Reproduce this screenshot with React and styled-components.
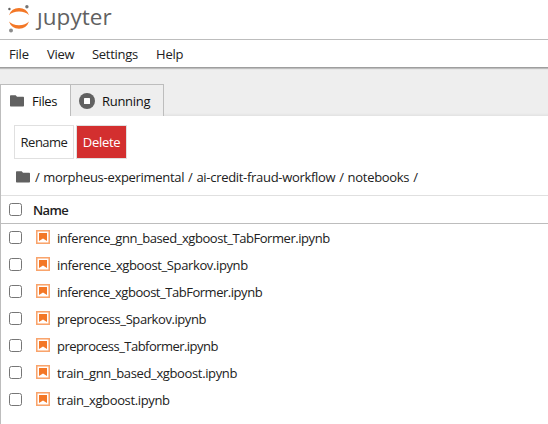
import React from "react";
import styled, { createGlobalStyle } from "styled-components";

const Global = createGlobalStyle`
  * { box-sizing: border-box; }
  body { margin: 0; background: #eee; overflow: hidden; }
`;
const Page = styled.div`
  width: 548px;
  height: 424px;
  display: flex;
  flex-direction: column;
  background: #eee;
  color: #212121;
  font: 13px/18px "Open Sans", "Noto Sans", sans-serif;
  white-space: nowrap;
`;
const Text = styled.span`
  letter-spacing: ${(p) => p.$ls ?? -0.3}px;
  word-spacing: ${(p) => p.$ws ?? 0}px;
`;
const Header = styled.header`
  height: 40px;
  flex: none;
  background: #fff;
  border-bottom: 1px solid #bdbdbd;
  display: flex;
  align-items: flex-start;
  padding-left: 7px;
`;
const Logo = styled.svg`
  width: 24px;
  height: 34px;
  flex: none;
`;
const Wordmark = styled.div`
  margin: 3px 0 0 6px;
  color: #616161;
  font: 22.5px/28px "Open Sans", sans-serif;
  letter-spacing: 0.05px;
`;
const DotlessJ = styled.span`
  display: inline-block;
  clip-path: inset(9px -4px -4px -4px);
`;
const MenuBar = styled.nav`
  height: 28px;
  flex: none;
  display: flex;
  background: #fff;
  border-bottom: 1px solid #9e9e9e;
  box-shadow: 0 1px 1px #bdbdbd;
  padding: 5px 0 0 9px;
`;
const MenuItem = styled.div`
  width: ${(p) => p.$w}px;
`;
const Tabs = styled.div`
  height: 48px;
  flex: none;
  display: flex;
  padding-top: 16px;
`;
const Tab = styled.div`
  width: ${(p) => p.$w}px;
  display: flex;
  align-items: center;
  gap: ${(p) => p.$gap}px;
  padding-left: ${(p) => p.$pad}px;
  padding-top: 1px;
  border: 1px solid #bdbdbd;
  border-bottom: 0;
  border-left-width: ${(p) => (p.$active ? 1 : 0)}px;
  background: ${(p) => (p.$active ? "#fff" : "#eee")};
  color: #111;
`;
const Panel = styled.main`
  flex: 1;
  background: #fff;
  border-left: 1px solid #bdbdbd;
`;
const TabShade = styled.div`
  flex: 1;
  align-self: stretch;
  background: linear-gradient(#eee calc(100% - 3px), #e2e2e2);
`;
const Toolbar = styled.div`
  display: flex;
  gap: 2px;
  padding: 9px 0 0 13px;
`;
const Button = styled.button`
  width: ${(p) => p.$w}px;
  height: 34px;
  padding: 0 0 1px;
  font: inherit;
  border: 1px solid #e0e0e0;
  background: ${(p) => (p.$danger ? "#d32f2f" : "#fff")};
  color: ${(p) => (p.$danger ? "#fff" : "#212121")};
`;
const Crumbs = styled.div`
  height: 37px;
  display: flex;
  align-items: center;
  gap: 5px;
  padding-left: 15px;
  border-bottom: 1px solid #e0e0e0;
`;
const ListHeader = styled.div`
  height: 28px;
  display: flex;
  align-items: center;
  padding-left: 8px;
  gap: 11px;
  border-bottom: 1px solid #bdbdbd;
  font-weight: 600;
`;
const Row = styled.div`
  height: 27px;
  display: flex;
  align-items: center;
  padding-left: 8px;
`;
const Check = styled.input.attrs({ type: "checkbox" })`
  appearance: none;
  width: 13px;
  height: 13px;
  margin: 0;
  flex: none;
  border: 1px solid #767676;
  border-radius: 2.5px;
  background: #fff;
`;
const NotebookSvg = styled.svg`
  width: 14px;
  height: 14px;
  margin: 0 7px 2px 14px;
  flex: none;
`;
const FolderSvg = styled.svg`
  width: 14px;
  height: 12px;
  flex: none;
`;
const StopSvg = styled.svg`
  width: 16px;
  height: 16px;
  flex: none;
`;

const Folder = () => (
  <FolderSvg viewBox="0 0 14 12">
    <path fill="#616161" d="M1 .3h4.700L7 1.700h6c.6 0 1 .4 1 1v7.800c0 .6-.4 1-1 1H1c-.6 0-1-.4-1-1V1.300C0 .7.4.3 1 .3Z" />
  </FolderSvg>
);
const Notebook = () => (
  <NotebookSvg viewBox="0 0 14 14">
    <rect x=".75" y=".75" width="12.5" height="12.5" fill="#fff" stroke="#f9a46c" strokeWidth="1.6" />
    <path fill="#f37726" d="M3 2.900h8v8.100L7 8.600 3 11Z" />
  </NotebookSvg>
);

const menus = [["File", 38, -0.2], ["View", 45, -0.3], ["Settings", 64, -0.3], ["Help", 40, -0.2]];
const files = [
  ["inference_gnn_based_xgboost_TabFormer.ipynb", -0.44],
  ["inference_xgboost_Sparkov.ipynb", -0.38],
  ["inference_xgboost_TabFormer.ipynb", -0.47],
  ["preprocess_Sparkov.ipynb", -0.42],
  ["preprocess_Tabformer.ipynb", -0.54],
  ["train_gnn_based_xgboost.ipynb", -0.36],
  ["train_xgboost.ipynb", -0.36],
];

export default function App() {
  return (
    <Page>
      <Global />
      <Header>
        <Logo viewBox="0 0 24 34">
          <g fill="#f37726">
            <path d="M2 15.200A10.600 10.600 0 0 1 22 15.200C19.800 12.800 16.200 11.600 12 11.600S4.200 12.800 2 15.200Z" />
            <path d="M2 21.600A10.600 10.600 0 0 0 22 21.600C19.800 24 16.200 25.300 12 25.300S4.200 24 2 21.600Z" />
          </g>
          <circle cx="2.400" cy="9" r="1.200" fill="#616161" />
          <circle cx="19.900" cy="6.700" r="1.700" fill="#757575" />
          <circle cx="4" cy="30.500" r="2" fill="#8c8c8c" />
        </Logo>
        <Wordmark><DotlessJ>j</DotlessJ>upyter</Wordmark>
      </Header>
      <MenuBar>
        {menus.map(([name, w, ls]) => (
          <MenuItem key={name} $w={w}><Text $ls={ls}>{name}</Text></MenuItem>
        ))}
      </MenuBar>
      <Tabs>
        <Tab $active $w={71} $gap={8} $pad={9}><Folder /><Text>Files</Text></Tab>
        <Tab $w={93} $gap={7} $pad={8}>
          <StopSvg viewBox="0 0 16 16">
            <circle cx="8" cy="8" r="8" fill="#616161" />
            <rect x="5" y="5" width="6" height="6" rx=".5" fill="#fff" />
          </StopSvg>
          <Text>Running</Text>
        </Tab>
        <TabShade />
      </Tabs>
      <Panel>
        <Toolbar>
          <Button $w={60}><Text $ls={-0.5}>Rename</Text></Button>
          <Button $w={51} $danger><Text $ls={-0.3}>Delete</Text></Button>
        </Toolbar>
        <Crumbs>
          <Folder />
          <Text $ls={-0.3} $ws={0.8}>/ morpheus-experimental / ai-credit-fraud-workflow / notebooks /</Text>
        </Crumbs>
        <ListHeader><Check /><Text $ls={-0.6}>Name</Text></ListHeader>
        {files.map(([name, ls]) => (
          <Row key={name}><Check /><Notebook /><Text $ls={ls}>{name}</Text></Row>
        ))}
      </Panel>
    </Page>
  );
}
